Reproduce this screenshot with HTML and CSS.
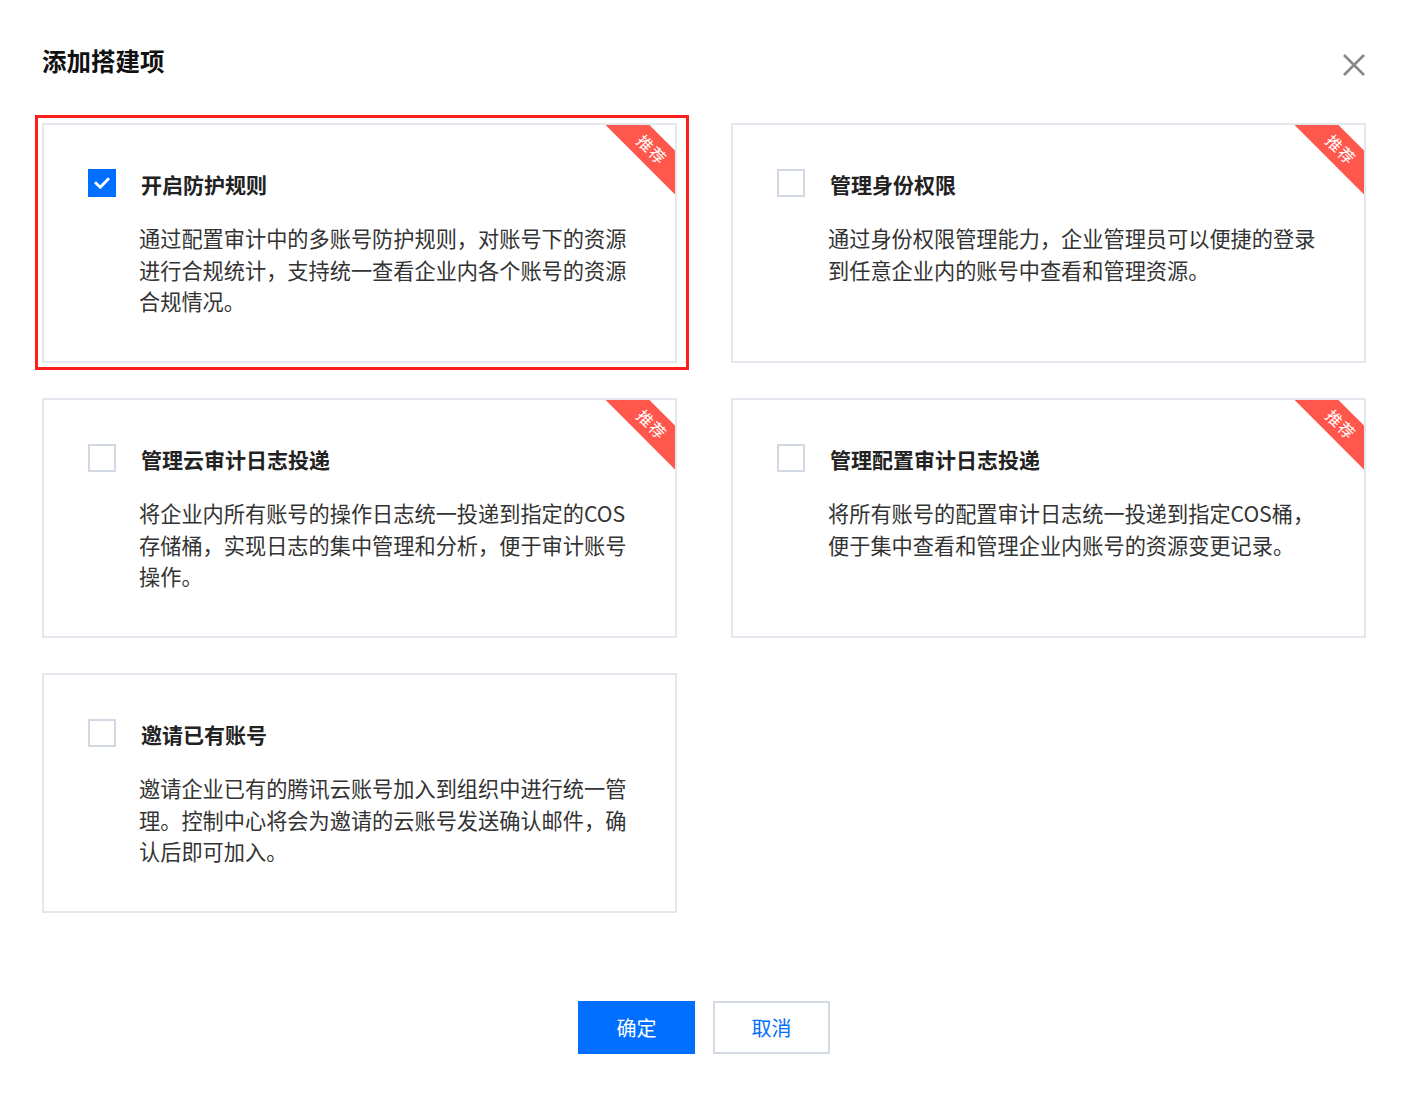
FILE: index.html
```html
<!DOCTYPE html>
<html lang="zh-CN">
<head>
<meta charset="utf-8">
<title>添加搭建项</title>
<link rel="stylesheet" href="styles.css">
</head>
<body>
<div class="dialog">
  <div class="header">
    <h1 class="title">添加搭建项</h1>
    <button class="close" aria-label="关闭">
      <svg width="24" height="24" viewBox="0 0 24 24"><path d="M2 2 L22 22 M22 2 L2 22" stroke="#888" stroke-width="2.6" fill="none"/></svg>
    </button>
  </div>

  <div class="grid">
    <div class="card selected">
      <div class="highlight"></div>
      <div class="corner"><div class="ribbon">推荐</div></div>
      <div class="card-head">
        <span class="checkbox checked">
          <svg width="20" height="20" viewBox="0 0 20 20"><path d="M4 10.2 L8.3 14.3 L16 6.3" stroke="#fff" stroke-width="2.8" fill="none" stroke-linecap="square"/></svg>
        </span>
        <span class="card-title">开启防护规则</span>
      </div>
      <p class="desc">通过配置审计中的多账号防护规则，对账号下的资源进行合规统计，支持统一查看企业内各个账号的资源合规情况。</p>
    </div>

    <div class="card">
      <div class="corner"><div class="ribbon">推荐</div></div>
      <div class="card-head">
        <span class="checkbox"></span>
        <span class="card-title">管理身份权限</span>
      </div>
      <p class="desc">通过身份权限管理能力，企业管理员可以便捷的登录到任意企业内的账号中查看和管理资源。</p>
    </div>

    <div class="card">
      <div class="corner"><div class="ribbon">推荐</div></div>
      <div class="card-head">
        <span class="checkbox"></span>
        <span class="card-title">管理云审计日志投递</span>
      </div>
      <p class="desc">将企业内所有账号的操作日志统一投递到指定的COS存储桶，实现日志的集中管理和分析，便于审计账号操作。</p>
    </div>

    <div class="card">
      <div class="corner"><div class="ribbon">推荐</div></div>
      <div class="card-head">
        <span class="checkbox"></span>
        <span class="card-title">管理配置审计日志投递</span>
      </div>
      <p class="desc">将所有账号的配置审计日志统一投递到指定COS桶，便于集中查看和管理企业内账号的资源变更记录。</p>
    </div>

    <div class="card">
      <div class="card-head">
        <span class="checkbox"></span>
        <span class="card-title">邀请已有账号</span>
      </div>
      <p class="desc">邀请企业已有的腾讯云账号加入到组织中进行统一管理。控制中心将会为邀请的云账号发送确认邮件，确认后即可加入。</p>
    </div>
  </div>

  <div class="footer">
    <button class="btn primary">确定</button>
    <button class="btn">取消</button>
  </div>
</div>
</body>
</html>
```

FILE: styles.css
```css
* { box-sizing: border-box; }
html, body {
  margin: 0;
  background: #fff;
  font-family: "Noto Sans CJK SC", "Noto Sans", "Liberation Sans", sans-serif;
  color: #333;
}
.dialog {
  width: 1407px;
  padding: 44px 41px 0 42px;
}
.header {
  display: flex;
  justify-content: space-between;
  align-items: flex-start;
  height: 79px;
}
.title {
  margin: 0;
  font-size: 24.5px;
  line-height: 34px;
  font-weight: 700;
  color: #111;
}
.close {
  border: 0;
  background: none;
  padding: 0;
  margin: 9px 0 0 0;
  width: 24px;
  height: 24px;
  cursor: pointer;
}
.grid {
  display: grid;
  grid-template-columns: 635px 635px;
  column-gap: 54px;
  row-gap: 35px;
}
.card {
  position: relative;
  height: 240px;
  border: 2px solid #e3e7ee;
  background: #fff;
  padding: 43px 45px 0 44px;
}
.highlight {
  position: absolute;
  left: -9px;
  top: -10px;
  right: -14px;
  bottom: -9px;
  border: 3px solid #fb1f1b;
  pointer-events: none;
}
.corner {
  position: absolute;
  top: 0;
  right: 0;
  width: 75px;
  height: 75px;
  overflow: hidden;
}
.ribbon {
  position: absolute;
  left: -3px;
  top: 9px;
  width: 110px;
  height: 31px;
  background: #ff574b;
  color: #fff;
  font-size: 16px;
  line-height: 31px;
  text-align: center;
  transform: rotate(45deg);
  letter-spacing: 1px;
}
.card-head {
  display: flex;
  align-items: center;
  height: 32px;
}
.checkbox {
  width: 28px;
  height: 28px;
  border: 2px solid #d3d9e2;
  background: #fff;
  display: flex;
  align-items: center;
  justify-content: center;
  margin-top: -2px;
  flex: none;
}
.checkbox.checked {
  background: #006eff;
  border-color: #006eff;
}
.card-title {
  margin-left: 25px;
  font-size: 21px;
  font-weight: 700;
  color: #222;
  line-height: 32px;
}
.desc {
  margin: 22px 0 0 51px;
  width: 498px;
  font-size: 21.2px;
  line-height: 31.5px;
  color: #333;
}
.footer {
  display: flex;
  justify-content: center;
  gap: 18px;
  margin-top: 88px;
}
.btn {
  width: 117px;
  height: 53px;
  border: 2px solid #d5dbe4;
  background: #fff;
  color: #006eff;
  font-family: inherit;
  font-size: 20px;
  padding: 0;
  cursor: pointer;
}
.btn.primary {
  background: #006eff;
  border-color: #006eff;
  color: #fff;
}
```
